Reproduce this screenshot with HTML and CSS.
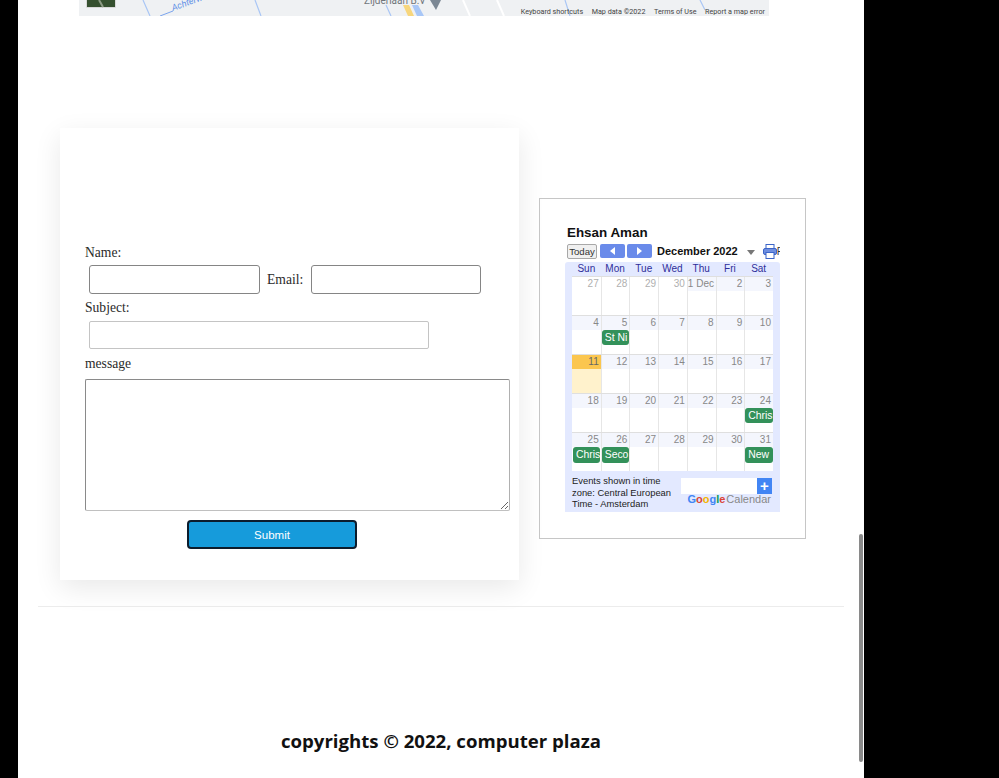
FILE: index.html
```html
<!DOCTYPE html>
<html lang="en">
<head>
<meta charset="utf-8">
<title>computer plaza</title>
<link rel="stylesheet" href="styles.css">
</head>
<body>
<div class="page">

<!-- bottom edge of the embedded map -->
<div class="map">
<svg class="map-art" width="690" height="16" viewBox="0 0 690 16">
<path d="M384 0L391 16M418 0L425 16" stroke="#fff" stroke-width="2" fill="none"/>
<path d="M64 0L71 16M176 0L182 16M307 5L312 16M486 0L491 16M621 0L626 10" stroke="#a9c6f5" stroke-width="1.2" fill="none"/>
<path d="M81 16L94 11" stroke="#7ba4ee" stroke-width="1" fill="none"/>
<path d="M324 5L329 16L335 16L330 5Z" fill="#f7d67c"/>
<path d="M333 5L338 16L345 16L339 5Z" fill="#a8c7f7"/>
<text class="map-road" x="94" y="11" transform="rotate(-20 94 11)">Achterw</text>
<text class="map-place" x="285" y="4">Zijderlaan B.V</text>
<path d="M351 0H362L357 10Z" fill="#7b8794"/>
<rect x="656" y="-10" width="27" height="10" fill="#fff"/>
<rect x="7" y="-4" width="30" height="12" rx="1" fill="#d8d8d8"/>
<rect x="8" y="-4" width="28" height="11" fill="#35502f"/>
<path d="M20 0L24 7" stroke="#8c9a84" stroke-width="2" fill="none"/>
</svg>
<div class="map-links">
<span>Keyboard shortcuts</span>
<span>Map data ©2022</span>
<span>Terms of Use</span>
<span>Report a map error</span>
</div>
</div>

<div class="contact">

<form class="card">
<label class="lbl">Name:</label>
<div class="line line-first">
<input type="text" class="box">
<label class="lbl lbl-inline">Email:</label>
<input type="text" class="box box-email">
</div>
<label class="lbl lbl-next">Subject:</label>
<div class="line">
<input type="text" class="box box-wide">
</div>
<label class="lbl lbl-msg">message</label>
<textarea class="msg"></textarea>
<button type="button" class="send">Submit</button>
</form>

<div class="cal-frame">
<div class="cal">
<div class="cal-title">Ehsan Aman</div>
<div class="cal-nav">
<span class="today">Today</span>
<span class="arrow"><i class="tri-left"></i></span>
<span class="arrow"><i class="tri-right"></i></span>
<span class="month">December 2022</span>
<i class="tri-down"></i>
<svg class="printer" width="14" height="15" viewBox="0 0 14 15">
<rect x="3" y="0.5" width="8" height="4" fill="#fff" stroke="#3b64c8"/>
<rect x="0.5" y="4.5" width="13" height="6" rx="1.5" fill="#6f8fe0" stroke="#3b64c8"/>
<rect x="3" y="8.5" width="8" height="6" fill="#fff" stroke="#3b64c8"/>
</svg>
<span class="print">P</span>
</div>
<div class="panel">
<div class="weekdays">
<span>Sun</span><span>Mon</span><span>Tue</span><span>Wed</span><span>Thu</span><span>Fri</span><span>Sat</span>
</div>
<div class="weeks">
<div class="week">
<div class="day off"><div class="num">27</div></div>
<div class="day off"><div class="num">28</div></div>
<div class="day off"><div class="num">29</div></div>
<div class="day off"><div class="num">30</div></div>
<div class="day"><div class="num">1 Dec</div></div>
<div class="day"><div class="num">2</div></div>
<div class="day"><div class="num">3</div></div>
</div>
<div class="week">
<div class="day"><div class="num">4</div></div>
<div class="day"><div class="num">5</div><div class="chip">St Ni</div></div>
<div class="day"><div class="num">6</div></div>
<div class="day"><div class="num">7</div></div>
<div class="day"><div class="num">8</div></div>
<div class="day"><div class="num">9</div></div>
<div class="day"><div class="num">10</div></div>
</div>
<div class="week">
<div class="day now"><div class="num">11</div></div>
<div class="day"><div class="num">12</div></div>
<div class="day"><div class="num">13</div></div>
<div class="day"><div class="num">14</div></div>
<div class="day"><div class="num">15</div></div>
<div class="day"><div class="num">16</div></div>
<div class="day"><div class="num">17</div></div>
</div>
<div class="week">
<div class="day"><div class="num">18</div></div>
<div class="day"><div class="num">19</div></div>
<div class="day"><div class="num">20</div></div>
<div class="day"><div class="num">21</div></div>
<div class="day"><div class="num">22</div></div>
<div class="day"><div class="num">23</div></div>
<div class="day"><div class="num">24</div><div class="chip">Chris</div></div>
</div>
<div class="week">
<div class="day"><div class="num">25</div><div class="chip">Chris</div></div>
<div class="day"><div class="num">26</div><div class="chip">Seco</div></div>
<div class="day"><div class="num">27</div></div>
<div class="day"><div class="num">28</div></div>
<div class="day"><div class="num">29</div></div>
<div class="day"><div class="num">30</div></div>
<div class="day"><div class="num">31</div><div class="chip">New</div></div>
</div>
</div>
<div class="cal-foot">
<div class="zone">Events shown in time zone: Central European Time - Amsterdam</div>
<div class="brand">
<div class="search"><span class="plus">+</span></div>
<div class="logo"><b><span class="g-blue">G</span><span class="g-red">o</span><span class="g-yel">o</span><span class="g-blue">g</span><span class="g-grn">l</span><span class="g-red">e</span></b><span class="logo-word">Calendar</span></div>
</div>
</div>
</div>
</div>
</div>

</div>

<hr class="rule">
<footer class="foot">copyrights © 2022, computer plaza</footer>

<div class="thumb"></div>
</div>
</body>
</html>
```

FILE: styles.css
```css
html, body {margin:0;padding:0;height:778px;overflow:hidden;background:#000;}
.page {position:relative;width:846px;height:778px;margin-left:18px;background:#fff;overflow:hidden;}

/* map */
.map {position:relative;width:690px;height:16px;margin-left:61px;background:#eff1f3;overflow:hidden;}
.map-art {display:block;}
.map-road {font:italic 9px "Roboto",sans-serif;fill:#5c8fe6;}
.map-place {font:10px "Roboto",sans-serif;fill:#70757a;}
.map-links {position:absolute;right:4px;bottom:0;display:flex;gap:8.5px;font:7.2px/9px "Roboto",sans-serif;color:#444;white-space:nowrap;}

/* contact row */
.contact {display:flex;align-items:flex-start;gap:20px;margin:112px 0 0 42px;}
.card {box-sizing:border-box;width:459px;height:452px;padding:115px 9px 0 25px;background:#fff;box-shadow:0 8px 26px rgba(0,0,0,.09);display:flex;flex-direction:column;align-items:flex-start;}
.lbl {font:13.6px/20px "Liberation Serif",serif;color:#2a2a2a;}
.lbl-inline {margin:0 8px 0 7px;}
.lbl-next {margin-top:4px;}
.lbl-msg {margin-top:5px;}
.line {display:flex;align-items:center;margin:3px 0 0 4px;}
.line-first {margin-top:2px;}
.box {box-sizing:border-box;width:171px;height:29px;padding:0 4px;border:1px solid #858585;border-radius:3px;background:#fff;outline:0;}
.box-email {width:170px;}
.box-wide {width:340px;height:28px;border-color:#c4c4c4;border-radius:2px;}
.msg {box-sizing:border-box;display:block;width:425px;height:132px;margin:5px 0 0 0;padding:2px;border:1px solid #8a8a8a;border-bottom-color:#c0c0c0;border-right-color:#b0b0b0;border-radius:2px;background:#fff;outline:0;}
.send {box-sizing:border-box;width:170px;height:29px;margin:9px 0 0 102px;padding:0;border:2px solid #0c1c2c;border-radius:4px;background:#169bdb;color:#fff;font:11.5px "Liberation Sans",Arial,sans-serif;}

/* calendar */
.cal-frame {box-sizing:border-box;width:267px;height:341px;margin-top:70px;padding:26px 0 0 25px;border:1px solid #c6c6c6;}
.cal {width:215px;font-family:"Liberation Sans",Arial,sans-serif;}
.cal-title {padding-left:2px;font-size:13.4px;line-height:16px;font-weight:bold;color:#111;}
.cal-nav {display:flex;align-items:center;height:16px;margin-top:2px;padding-left:2px;overflow:hidden;}
.cal-nav > * {flex:none;}
.today {box-sizing:border-box;width:30px;height:15px;border:1px solid #a8a8a8;border-radius:2px;background:#f0f0f0;font-size:9.6px;line-height:13px;text-align:center;color:#333;}
.arrow {display:flex;align-items:center;justify-content:center;width:25px;height:14px;margin-left:2px;border-radius:2px;background:#6a8bea;}
.today + .arrow {margin-left:3px;}
.tri-left {border:4px solid transparent;border-right:5px solid #fff;border-left:0;}
.tri-right {border:4px solid transparent;border-left:5px solid #fff;border-right:0;}
.month {margin-left:5px;font-size:11px;font-weight:bold;color:#111;white-space:nowrap;}
.tri-down {margin:2px 0 0 9px;border:4px solid transparent;border-top:5px solid #777;border-bottom:0;}
.printer {margin-left:8px;}
.print {font-size:10px;color:#333;}
.panel {box-sizing:border-box;height:250px;margin-top:3px;padding:0 7px;background:#e3e9ff;border-radius:3px 3px 0 0;}
.weekdays {display:grid;grid-template-columns:repeat(7,1fr);height:14px;font-size:10px;line-height:14px;text-align:center;color:#2f2f9a;}
.week {box-sizing:border-box;display:grid;grid-template-columns:repeat(7,1fr);height:39px;border-top:1px solid #dfdfdf;background:#fff;}
.day {min-width:0;border-left:1px solid #e6e6e6;}
.day:first-child {border-left:0;}
.num {height:14px;padding-right:2px;background:#f4f6fd;font-size:10px;line-height:13px;text-align:right;color:#888;white-space:nowrap;}
.off .num {background:#fff;color:#b0b0b0;}
.now {background:#fff2cc;}
.now .num {background:#fbc64f;color:#666;}
.chip {box-sizing:border-box;height:15px;padding-left:3px;border-radius:3px;background:#33915a;color:#fff;font-size:10.4px;line-height:15px;white-space:nowrap;overflow:hidden;}
.day:first-child .chip {margin:0 1px;}
.week:last-child .chip {height:16px;line-height:16px;}
.cal-foot {display:flex;justify-content:space-between;padding-top:4px;}
.zone {width:104px;font-size:9.4px;line-height:11.5px;color:#222;}
.brand {display:flex;flex-direction:column;align-items:flex-end;padding:3px 1px 0 0;}
.search {display:flex;justify-content:flex-end;width:91px;height:16px;background:#fff;}
.plus {width:15px;height:16px;background:#4285f4;color:#fff;font-size:15px;font-weight:bold;line-height:15px;text-align:center;}
.logo {margin-top:-1px;padding-right:1px;font-size:11px;line-height:13px;color:#888;white-space:nowrap;}
.logo-word {margin-left:1px;}
.g-blue {color:#4285f4;}
.g-red {color:#db4437;}
.g-yel {color:#f4b400;}
.g-grn {color:#0f9d58;}

/* footer */
.rule {width:806px;height:1px;margin:26px 0 0 20px;border:0;background:#ececec;}
.foot {margin-top:121px;font:bold 18.6px/26px "Open Sans",sans-serif;text-align:center;color:#111;}

/* overlay scrollbar */
.thumb {position:absolute;top:534px;left:841px;width:3.5px;height:228px;border-radius:2px;background:#8a8a8a;}
```
